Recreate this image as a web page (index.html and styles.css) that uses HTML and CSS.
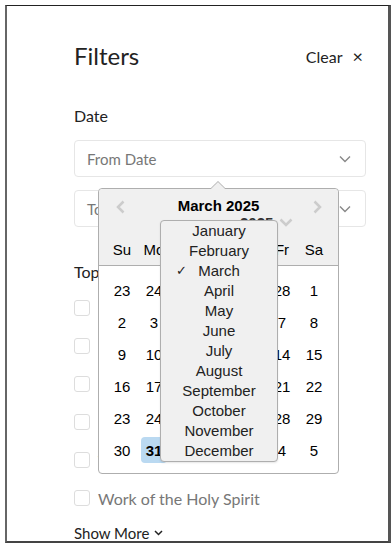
FILE: index.html
```html
<!DOCTYPE html>
<html lang="en">
<head>
  <meta charset="UTF-8" />
  <meta name="viewport" content="width=device-width, initial-scale=1.0" />
  <title>Filters</title>
  <link rel="stylesheet" href="styles.css">
</head>
<body>
  <div class="frame">
    <div class="panel">
      <div class="panel-head">
        <h1>Filters</h1>
        <button class="clear">Clear <span class="x">&times;</span></button>
      </div>

      <h2 class="label date-label">Date</h2>
      <div class="field">
        <span>From Date</span>
        <svg class="chev" width="12" height="8" viewBox="0 0 12 8"><path d="M1 1.5l5 5 5-5" fill="none" stroke="#888" stroke-width="1.4"/></svg>
      </div>
      <div class="field">
        <span>To Date</span>
        <svg class="chev" width="12" height="8" viewBox="0 0 12 8"><path d="M1 1.5l5 5 5-5" fill="none" stroke="#888" stroke-width="1.4"/></svg>
      </div>

      <h2 class="label topics-label">Topics</h2>
      <ul class="checks">
        <li><span class="box"></span>Salvation</li>
        <li><span class="box"></span>Faith and Works</li>
        <li><span class="box"></span>Prayer</li>
        <li><span class="box"></span>Grace</li>
        <li><span class="box"></span>The Church</li>
        <li><span class="box"></span>Work of the Holy Spirit</li>
      </ul>
      <button class="more">Show More
        <svg width="9" height="6" viewBox="0 0 9 6"><path d="M1 1l3.5 3.5L8 1" fill="none" stroke="#222" stroke-width="1.5"/></svg>
      </button>
    </div>

    <!-- datepicker popup, open over the form -->
    <div class="picker">
      <div class="picker-head">
        <svg class="nav prev" width="9" height="14" viewBox="0 0 9 14"><path d="M7.5 1.5L2 7l5.5 5.5" fill="none" stroke="#ccc" stroke-width="2.5"/></svg>
        <div class="month-title">March 2025</div>
        <svg class="nav next" width="9" height="14" viewBox="0 0 9 14"><path d="M1.5 1.5L7 7l-5.5 5.5" fill="none" stroke="#ccc" stroke-width="2.5"/></svg>
        <div class="year-select">2025
          <svg width="14" height="9" viewBox="0 0 14 9"><path d="M1.5 1.5L7 7l5.5-5.5" fill="none" stroke="#ccc" stroke-width="2.5"/></svg>
        </div>
        <div class="day-names">
          <span>Su</span><span>Mo</span><span>Tu</span><span>We</span><span>Th</span><span>Fr</span><span>Sa</span>
        </div>
      </div>
      <div class="days">
        <span>23</span><span>24</span><span>25</span><span>26</span><span>27</span><span>28</span><span>1</span>
        <span>2</span><span>3</span><span>4</span><span>5</span><span>6</span><span>7</span><span>8</span>
        <span>9</span><span>10</span><span>11</span><span>12</span><span>13</span><span>14</span><span>15</span>
        <span>16</span><span>17</span><span>18</span><span>19</span><span>20</span><span>21</span><span>22</span>
        <span>23</span><span>24</span><span>25</span><span>26</span><span>27</span><span>28</span><span>29</span>
        <span>30</span><span class="selected">31</span><span>1</span><span>2</span><span>3</span><span>4</span><span>5</span>
      </div>

      <ul class="month-list">
        <li>January</li>
        <li>February</li>
        <li class="current"><span class="tick">&#10003;</span>March</li>
        <li>April</li>
        <li>May</li>
        <li>June</li>
        <li>July</li>
        <li>August</li>
        <li>September</li>
        <li>October</li>
        <li>November</li>
        <li>December</li>
      </ul>
    </div>
  </div>
</body>
</html>
```

FILE: styles.css
```css
body {
  margin: 0;
  background: #fff;
  font-family: Lato, "Open Sans", sans-serif;
  color: #222;
}
.frame {
  position: relative;
  box-sizing: border-box;
  width: 386px;
  height: 538px;
  margin: 5px 0 0 5px;
  border-top: 1px solid #222;
  border-left: 2px solid #666;
  border-right: 3px solid #555;
  border-bottom: 2px solid #444;
  overflow: hidden;
}
.panel {
  padding: 35px 22px 0 67px;
}
.panel-head {
  display: flex;
  justify-content: space-between;
  align-items: center;
  height: 30px;
}
h1 {
  margin: 0;
  font-size: 24px;
  font-weight: 400;
  line-height: 30px;
}
button {
  font-family: inherit;
  background: none;
  border: none;
  padding: 0;
  color: #222;
  cursor: pointer;
}
.clear {
  font-size: 16px;
  display: flex;
  align-items: center;
  gap: 10px;
  margin-right: 3px;
}
.clear .x {
  font-size: 18px;
}
.label {
  margin: 0;
  font-size: 16px;
  font-weight: 400;
  line-height: 20px;
}
.date-label {
  margin-top: 35px;
  margin-bottom: 14px;
}
.field {
  box-sizing: border-box;
  height: 37px;
  border: 1px solid #e6e6e6;
  border-radius: 4px;
  display: flex;
  align-items: center;
  justify-content: space-between;
  padding: 0 14px 0 12px;
  font-size: 15px;
  color: #777;
  margin-bottom: 13px;
}
.topics-label {
  margin-top: 35px;
  margin-bottom: 7px;
}
.checks {
  list-style: none;
  margin: 0;
  padding: 0;
}
.checks li {
  height: 38px;
  display: flex;
  align-items: center;
  gap: 8px;
  font-size: 16px;
  color: #777;
}
.box {
  box-sizing: border-box;
  width: 16px;
  height: 16px;
  border: 1px solid #ddd;
  border-radius: 3px;
}
.more {
  margin-top: 6px;
  font-size: 15px;
  line-height: 20px;
  display: flex;
  align-items: center;
  gap: 5px;
}

/* datepicker */
.picker {
  position: absolute;
  left: 91px;
  top: 182px;
  width: 241px;
  height: 286px;
  box-sizing: border-box;
  border: 1px solid #aeaeae;
  border-radius: 4px;
  background: #fff;
  font-family: "Liberation Sans", Arial, sans-serif;
  color: #000;
}
.picker::before,
.picker::after {
  content: "";
  position: absolute;
  left: 114px;
  width: 10px;
  height: 10px;
  transform: rotate(45deg);
}
.picker::before {
  top: -6px;
  background: #aeaeae;
}
.picker::after {
  top: -5px;
  background: #f0f0f0;
}
.picker-head {
  position: relative;
  z-index: 1;
  height: 76px;
  background: #f0f0f0;
  border-bottom: 1px solid #aeaeae;
  border-radius: 4px 4px 0 0;
}
.month-title {
  text-align: center;
  font-weight: 700;
  font-size: 15px;
  line-height: 18px;
  padding-top: 8px;
}
.nav {
  position: absolute;
  top: 11px;
}
.prev { left: 17px; }
.next { right: 16px; }
.year-select {
  position: absolute;
  left: 141px;
  top: 25px;
  font-size: 15px;
  font-weight: 700;
  color: #333;
  display: flex;
  align-items: center;
  gap: 6px;
}
.day-names {
  position: absolute;
  left: 7px;
  top: 52px;
  display: grid;
  grid-template-columns: repeat(7, 32px);
  font-size: 15px;
  text-align: center;
}
.days {
  display: grid;
  grid-template-columns: repeat(7, 32px);
  grid-auto-rows: 32px;
  padding: 8px 0 0 7px;
  font-size: 15px;
}
.days span {
  display: flex;
  align-items: center;
  justify-content: center;
}
.days .selected {
  background: #bad9f1;
  border-radius: 4px;
  font-weight: 700;
  margin: 3px;
}
.month-list {
  position: absolute;
  z-index: 2;
  left: 61px;
  top: 31px;
  width: 118px;
  box-sizing: border-box;
  margin: 0;
  padding: 0;
  list-style: none;
  background: #f0f0f0;
  border: 1px solid #aeaeae;
  border-radius: 4px;
  box-shadow: 0 1px 2px rgba(0, 0, 0, 0.1);
}
.month-list li {
  position: relative;
  height: 20px;
  line-height: 19px;
  text-align: center;
  font-size: 15px;
  color: #222;
}
.month-list .tick {
  position: absolute;
  left: 15px;
  font-size: 13px;
}
```
